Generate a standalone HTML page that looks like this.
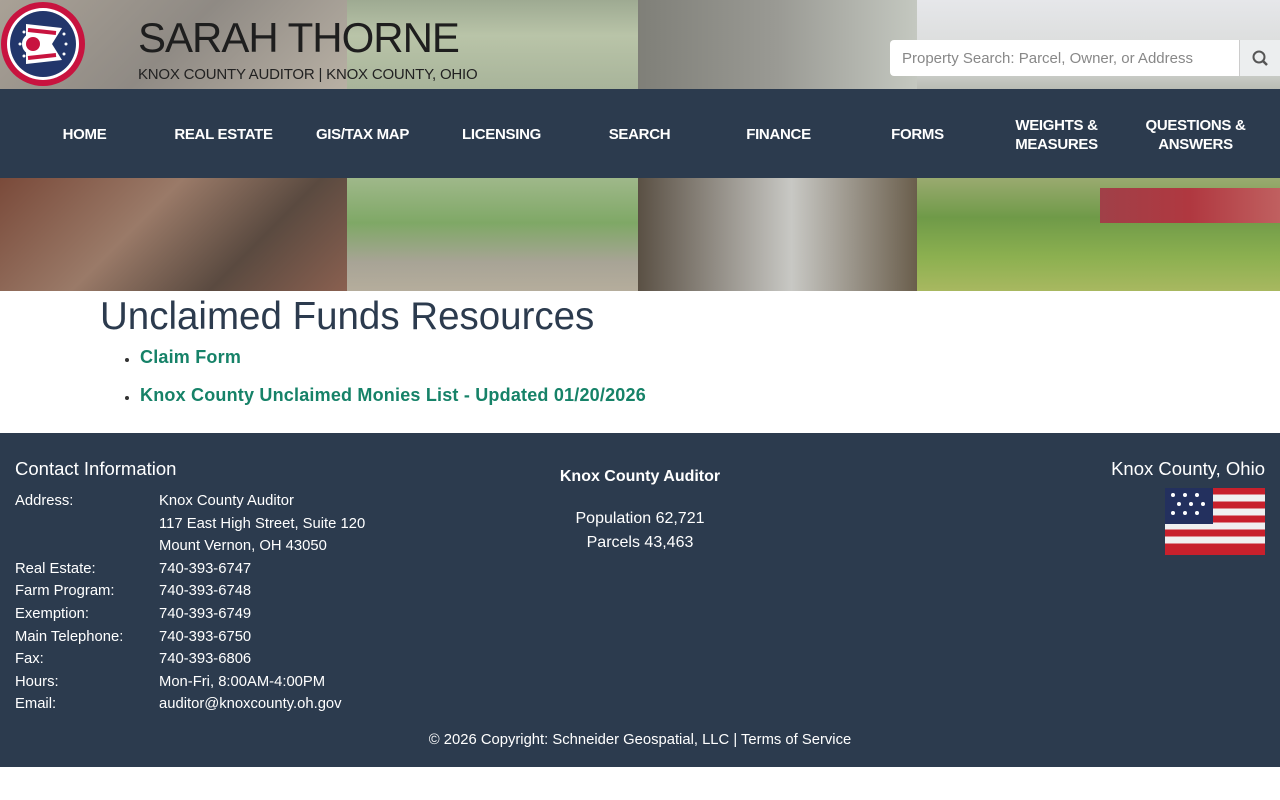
<!DOCTYPE html>
<html><head><meta charset="utf-8"><style>
*{margin:0;padding:0;box-sizing:border-box}
body{width:1280px;height:800px;background:#fff;font-family:"Liberation Sans",sans-serif;position:relative;overflow:hidden}
.hdr{position:absolute;top:0;left:0;width:1280px;height:89px}
.p{position:absolute;top:0;height:100%}
.nav{position:absolute;top:89px;left:0;width:1280px;height:89px;background:#2c3b4e}
.nav div{position:absolute;top:1px;height:89px;width:139px;display:flex;align-items:center;justify-content:center;text-align:center;color:#fff;font-weight:bold;font-size:15px;line-height:19px;letter-spacing:-0.3px}
.ban{position:absolute;top:178px;left:0;width:1280px;height:113px}
h1{position:absolute;top:295px;left:100px;font-weight:normal;font-size:38.5px;color:#2c3b4e}
ul{position:absolute;top:347px;left:140px;list-style:none}
li{color:#168268;font-weight:bold;font-size:18px;height:38px;position:relative;letter-spacing:0.2px}
li:before{content:"";position:absolute;left:-15px;top:11px;width:4px;height:4px;border-radius:50%;background:#333}
.ft{position:absolute;top:433px;left:0;width:1280px;height:334px;background:#2c3b4e;color:#fff}
.ft .r{position:absolute;font-size:14.8px}
</style></head><body>
<div class="hdr">
<div class="p" style="left:0;width:347px;background:linear-gradient(135deg,#a9a196,#8f8a84 50%,#b8b0a4)"></div>
<div class="p" style="left:347px;width:291px;background:linear-gradient(180deg,#9eaa92,#b9c4a8 40%,#a8b49a)"></div>
<div class="p" style="left:638px;width:279px;background:linear-gradient(90deg,#7f7f78,#9a9a94 50%,#c4c8c0)"></div>
<div class="p" style="left:917px;width:363px;background:linear-gradient(180deg,#e6e7ea,#d8dad8 70%,#b9bcb4)"></div>
<svg style="position:absolute;left:0;top:0" width="86" height="88" viewBox="0 0 86 88"><circle cx="43" cy="44" r="42" fill="#c8133f"/><circle cx="43" cy="44" r="36" fill="#fff"/><circle cx="43" cy="44" r="33" fill="#22366b"/><path d="M26 24 L62 28 L52 44 L62 60 L26 64 Z" fill="#fff"/><path d="M28 30 L56 33 M28 58 L56 55" stroke="#c8133f" stroke-width="4"/><circle cx="33" cy="44" r="11" fill="#fff"/><circle cx="33" cy="44" r="7" fill="#c8133f"/><g fill="#fff"><circle cx="20" cy="44" r="1.5"/><circle cx="66" cy="44" r="1.5"/><circle cx="24" cy="32" r="1.5"/><circle cx="24" cy="56" r="1.5"/><circle cx="64" cy="34" r="1.5"/><circle cx="64" cy="54" r="1.5"/></g></svg>
<div style="position:absolute;left:138px;top:14px;font-size:42px;color:#1e1e1e;letter-spacing:-1px">SARAH THORNE</div>
<div style="position:absolute;left:138px;top:66px;font-size:15px;color:#222;letter-spacing:-0.2px">KNOX COUNTY AUDITOR | KNOX COUNTY, OHIO</div>
<div style="position:absolute;left:890px;top:40px;width:350px;height:36px;background:#fff;border-radius:4px 0 0 4px;font-size:15px;color:#888;padding:10px 12px">Property Search: Parcel, Owner, or Address</div>
<div style="position:absolute;left:1239px;top:40px;width:41px;height:36px;background:#eceeef;border-left:1px solid #ccc"><svg width="41" height="36"><circle cx="19" cy="17" r="5.5" fill="none" stroke="#555" stroke-width="2"/><path d="M23 21l4 4" stroke="#555" stroke-width="2.5"/></svg></div>
</div>
<div class="nav">
<div style="left:15px">HOME</div><div style="left:154px">REAL ESTATE</div><div style="left:293px">GIS/TAX MAP</div><div style="left:432px">LICENSING</div><div style="left:570px">SEARCH</div><div style="left:709px">FINANCE</div><div style="left:848px">FORMS</div><div style="left:987px">WEIGHTS &amp;<br>MEASURES</div><div style="left:1126px">QUESTIONS &amp;<br>ANSWERS</div>
</div>
<div class="ban">
<div class="p" style="left:0;width:347px;background:linear-gradient(135deg,#7a4a3a,#9a7a68 40%,#5a4a40 70%,#8a6050)"></div>
<div class="p" style="left:347px;width:291px;background:linear-gradient(180deg,#9fb88a,#7fa866 40%,#a8a496 75%,#b5ad9c)"></div>
<div class="p" style="left:638px;width:279px;background:linear-gradient(90deg,#5a5044,#c8c8c4 55%,#6a5e4c)"></div>
<div class="p" style="left:917px;width:363px;background:linear-gradient(180deg,#9aaa70,#6f9a48 35%,#8cb050 70%,#a8b860)"></div>
<div style="position:absolute;left:1100px;top:10px;width:180px;height:35px;background:linear-gradient(90deg,#a04048,#b03840,#c06060)"></div>
</div>
<h1>Unclaimed Funds Resources</h1>
<ul><li>Claim Form</li><li>Knox County Unclaimed Monies List - Updated 01/20/2026</li></ul>
<div class="ft">
<div class="r" style="left:15px;top:25px;font-size:18.5px">Contact Information</div>
<div class="r" style="left:15px;top:57px;line-height:22.6px">Address:<br><br><br>Real Estate:<br>Farm Program:<br>Exemption:<br>Main Telephone:<br>Fax:<br>Hours:<br>Email:</div>
<div class="r" style="left:159px;top:57px;line-height:22.6px">Knox County Auditor<br>117 East High Street, Suite 120<br>Mount Vernon, OH 43050<br>740-393-6747<br>740-393-6748<br>740-393-6749<br>740-393-6750<br>740-393-6806<br>Mon-Fri, 8:00AM-4:00PM<br>auditor@knoxcounty.oh.gov</div>
<div class="r" style="left:440px;width:400px;text-align:center;top:35px;font-weight:bold;font-size:16px">Knox County Auditor</div>
<div class="r" style="left:440px;width:400px;text-align:center;top:74px;font-size:16px;line-height:24px">Population 62,721<br>Parcels 43,463</div>
<div class="r" style="right:15px;top:25px;font-size:18.5px">Knox County, Ohio</div>
<svg style="position:absolute;left:1165px;top:55px" width="100" height="67"><rect width="100" height="67" fill="#c8202c"/><path d="M0 10h100M0 24h100M0 38h100M0 52h100" stroke="#f0f0f0" stroke-width="7"/><path d="M0 0h48v36H0z" fill="#23305e"/><g fill="#fff"><circle cx="8" cy="7" r="2"/><circle cx="20" cy="7" r="2"/><circle cx="32" cy="7" r="2"/><circle cx="14" cy="16" r="2"/><circle cx="26" cy="16" r="2"/><circle cx="38" cy="16" r="2"/><circle cx="8" cy="25" r="2"/><circle cx="20" cy="25" r="2"/><circle cx="32" cy="25" r="2"/></g></svg>
<div class="r" style="left:0;width:1280px;text-align:center;top:299px">© 2026 Copyright: Schneider Geospatial, LLC | Terms of Service</div>
</div>
</body></html>
